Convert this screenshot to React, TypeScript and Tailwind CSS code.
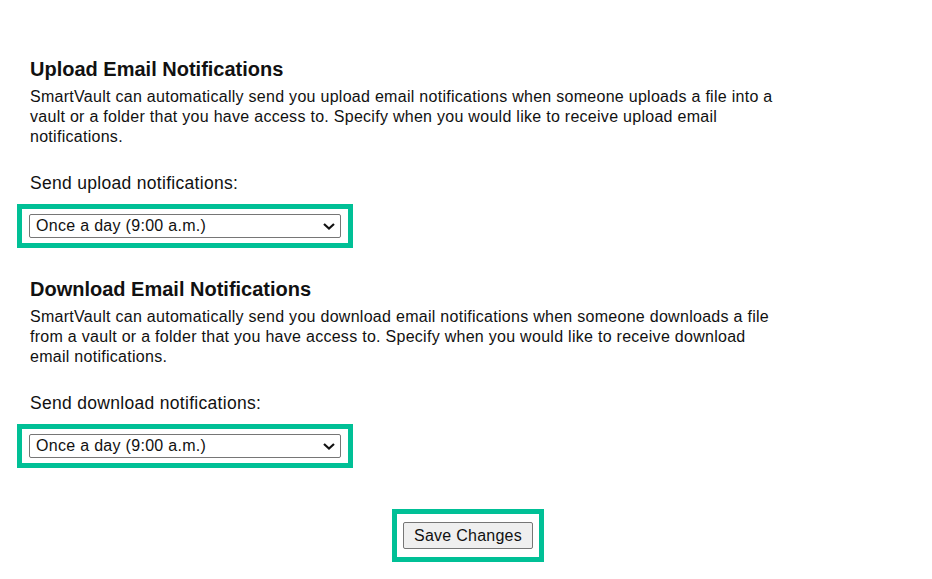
import { useState } from "react";

const OPTIONS = [
    "Never",
    "Immediately",
    "Once an hour",
    "Once a day (9:00 a.m.)",
];

function Chevron() {
    return (
        <svg
            className="pointer-events-none absolute right-[6px] top-[9px]"
            width="12"
            height="7"
            viewBox="0 0 12 7"
            fill="none"
        >
            <path d="M1 1l5 4.5L11 1" stroke="#111" strokeWidth="2.2" />
        </svg>
    );
}

function Highlight(props: { children: React.ReactNode; className?: string }) {
    return (
        <div className={"border-[5px] border-[#00c096] " + (props.className ?? "")}>
            {props.children}
        </div>
    );
}

function NotificationSection(props: { kind: string; text: string; className?: string }) {
    const [value, setValue] = useState(OPTIONS[3]);
    return (
        <section className={props.className}>
            <h2 className="ml-[13px] text-[20px] font-bold leading-[24px]">
                {props.kind} Email Notifications
            </h2>
            <p className="ml-[13px] mt-[6px] w-[750px] leading-[20px] tracking-[0.28px]">
                {props.text}
            </p>
            <p className="ml-[13px] mt-[26px] text-[17.5px] leading-[20px] tracking-[0.3px]">
                Send {props.kind.toLowerCase()} notifications:
            </p>
            <Highlight className="mt-[11px] w-[336px] px-[7px] py-[5px]">
                <div className="relative h-[24px] w-[312px]">
                    <select
                        value={value}
                        onChange={(e) => setValue(e.target.value)}
                        className="h-[24px] w-full appearance-none rounded-[2px] border border-[#767676] bg-white pl-[6px] text-[16px] leading-[20px] tracking-[0.3px] text-[#111]"
                    >
                        {OPTIONS.map((o) => (
                            <option key={o}>{o}</option>
                        ))}
                    </select>
                    <Chevron />
                </div>
            </Highlight>
        </section>
    );
}

export default function App() {
    return (
        <div
            className="min-h-[579px] bg-white pl-[17px] pt-[57px] text-[16px] text-[#111]"
            style={{ fontFamily: '"Liberation Sans", Arial, sans-serif' }}
        >
            <NotificationSection
                kind="Upload"
                text="SmartVault can automatically send you upload email notifications when someone uploads a file into a vault or a folder that you have access to. Specify when you would like to receive upload email notifications."
            />
            <NotificationSection
                kind="Download"
                className="mt-[29px]"
                text="SmartVault can automatically send you download email notifications when someone downloads a file from a vault or a folder that you have access to. Specify when you would like to receive download email notifications."
            />
            <Highlight className="ml-[375px] mt-[41px] w-[152px] px-[6px] pb-[8px] pt-[8px]">
                <button className="h-[27px] w-[130px] rounded-[2px] border border-[#767676] bg-[#efefef] text-[16px] leading-[20px] tracking-[0.25px] text-[#111]">
                    Save Changes
                </button>
            </Highlight>
        </div>
    );
}
